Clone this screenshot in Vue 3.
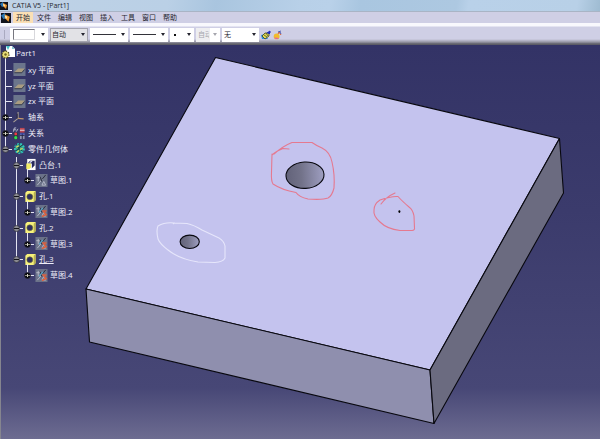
<script setup>
const menus = ['开始', '文件', '编辑', '视图', '插入', '工具', '窗口', '帮助']

const combos = [
  { id: 'fill', label: '填充颜色', kind: 'swatch', text: '' },
  { id: 'opacity', label: '透明度', kind: 'grey', text: '自动' },
  { id: 'width', label: '线宽', kind: 'line', text: '' },
  { id: 'type', label: '线型', kind: 'line', text: '' },
  { id: 'point', label: '点符号', kind: 'point', text: '' },
  { id: 'render', label: '渲染样式', kind: 'off', text: '自动' },
  { id: 'layer', label: '图层', kind: 'layer', text: '无' },
]

// rails: one entry per indent column. through = passing line, end = last branch
const rows = [
  { text: 'xy 平面', icon: 'plane', rails: ['tee'] },
  { text: 'yz 平面', icon: 'plane', rails: ['tee'] },
  { text: 'zx 平面', icon: 'plane', rails: ['tee'] },
  { text: '轴系', icon: 'axis', rails: ['tee'], node: '+' },
  { text: '关系', icon: 'relation', rails: ['tee'], node: '+' },
  { text: '零件几何体', icon: 'body', rails: ['end'], node: '-' },
  { text: '凸台.1', icon: 'pad', rails: ['', 'tee'], node: '-' },
  { text: '草图.1', icon: 'sketch', rails: ['', 'through', 'end'], node: '+' },
  { text: '孔.1', icon: 'hole', rails: ['', 'tee'], node: '-' },
  { text: '草图.2', icon: 'sketchpos', rails: ['', 'through', 'end'], node: '+' },
  { text: '孔.2', icon: 'hole', rails: ['', 'tee'], node: '-' },
  { text: '草图.3', icon: 'sketchpos', rails: ['', 'through', 'end'], node: '+' },
  { text: '孔.3', icon: 'hole', rails: ['', 'end'], node: '-', current: true },
  { text: '草图.4', icon: 'sketchpos', rails: ['', '', 'end'], node: '+' },
]
</script>

<template>
  <div class="app">
    <header class="title">
      <svg class="logo" viewBox="0 0 8 8" aria-hidden="true">
        <rect width="8" height="8" fill="#10131c" />
        <path d="M0 2 L3 0 L4 4 L2 5Z" fill="#2878b8" />
        <path d="M3 1 L7 3 L6 7 L3 4Z" fill="#ef9a32" />
        <path d="M3 2 L5 3 L4 5Z" fill="#fff5cc" />
      </svg>
      <span>CATIA V5 - [Part1]</span>
    </header>

    <nav class="menu">
      <svg class="logo big" viewBox="0 0 8 8" aria-hidden="true">
        <rect width="8" height="8" fill="#10131c" />
        <path d="M0 2 L3 0 L4 4 L2 5Z" fill="#2878b8" />
        <path d="M3 1 L7 3 L6 7 L3 4Z" fill="#ef9a32" />
        <path d="M3 2 L5 3 L4 5Z" fill="#fff5cc" />
      </svg>
      <button v-for="(m, i) in menus" :key="m" type="button" :class="{ open: i === 0 }">{{ m }}</button>
    </nav>

    <div class="tools" role="toolbar">
      <span class="grip"></span>
      <div v-for="c in combos" :key="c.id" class="combo" :class="c.kind">
        <select :id="c.id" :aria-label="c.label" :disabled="c.kind === 'off'">
          <option>{{ c.text }}</option>
        </select>
        <span v-if="!c.text" class="sample"></span>
        <svg class="arrow" viewBox="0 0 4 3" aria-hidden="true"><path d="M0 0H4L2 3Z" fill="currentColor" /></svg>
      </div>
      <button type="button" class="tool" aria-label="格式刷">
        <svg viewBox="0 0 10 10">
          <path d="M0 5 L4 4 L7 9 H1Z" fill="#2f8fe0" />
          <path d="M1 6 L4 3 L8 3 L8 6 L4 9Z" fill="#e2dc52" stroke="#3b4024" stroke-width=".8" />
          <path d="M3 5 L6 7 M5 3 L7 6" stroke="#3b4024" stroke-width=".7" />
          <path d="M6 3 L9 1 L9 3 L8 4" fill="#1c2cc0" stroke="#1c2cc0" />
        </svg>
      </button>
      <button type="button" class="tool" aria-label="图形属性向导">
        <svg viewBox="0 0 10 10">
          <circle cx="3.6" cy="6.4" r="2.900" fill="#f2bc2c" />
          <path d="M1 7.5 A3 3 0 0 0 6 8Z" fill="#df5fae" />
          <path d="M5 4 L6 2 L8 5" fill="none" stroke="#e0602a" stroke-width="1" />
          <path d="M5 2 L8 1 M7 2 L8 4" stroke="#5060b8" stroke-width="1" />
        </svg>
      </button>
    </div>

    <main class="view">
      <svg class="model" viewBox="1 45 599 394" preserveAspectRatio="xMinYMin meet" role="img" aria-label="零件模型">
        <defs>
          <linearGradient id="bore">
            <stop offset="0" stop-color="#626279" />
            <stop offset=".4" stop-color="#727289" />
            <stop offset="1" stop-color="#9f9fc2" />
          </linearGradient>
        </defs>
        <g stroke="#08080f" stroke-width="1.1" stroke-linejoin="round">
          <path d="M215.500 57.500L559.500 138.500L430 370L86 289Z" fill="#c4c3ee" />
          <path d="M86 289L430 370L434 423.500L89.500 342Z" fill="#8f8fae" />
          <path d="M559.500 138.500L563.500 193L434 423.500L430 370Z" fill="#6b6b80" />
          <ellipse cx="305" cy="175.200" rx="19" ry="13.200" fill="url(#bore)" transform="rotate(-3 305 175)" />
          <ellipse cx="189.700" cy="241.800" rx="9.600" ry="6.700" fill="url(#bore)" />
        </g>
        <ellipse cx="399.400" cy="211.600" rx="1" ry="1.300" fill="#000" />
        <g fill="none" stroke="#e5798f" stroke-width="1.1" stroke-linecap="round" stroke-linejoin="round">
          <path d="M289 149L283 148.500Q276 151 272 155M274 154Q283 146 292 142.500L312 142.500Q317 146 322 148Q330 152 332 162Q335 175 334 188Q332 196 328 198Q323 200 308 199Q299 197 296 192.500Q282 190 273 184Q271 181 271.500 172L272 154" />
          <path d="M395 193Q386 197 381 204M398 196.500Q391 196 380 200Q374 204 374 210Q373 216 380 222Q387 229 400 230.500L412 230.500Q415 230 414.500 228L414 216Q413 210 409 207Q402 201 398 196.500" />
        </g>
        <path d="M173 224L174 223Q165 222 158 226Q156 230 158 239Q160 244 168 250Q179 259 198 262L215 262.500Q223 262 225 258L225 246Q224 241 219 238L202 230Q194 225 187 223.500L174 223" fill="none" stroke="#e6e6fb" stroke-width="1.1" />
      </svg>

      <section class="spec">
        <h1 class="root">
          <svg viewBox="0 0 15 17" aria-hidden="true">
            <path d="M5 1H11L14 4V12H7L5 9Z" fill="#fff" />
            <path d="M5 1H9L7 5Z" fill="#49c3c8" /><path d="M11 1V4H14Z" fill="#8bc9d4" />
            <path d="M4.500 13V17" stroke="#e8e8f4" />
            <circle cx="4.500" cy="9.500" r="3.500" fill="#eadf78" stroke="#51481e" stroke-width="1.400" stroke-dasharray="1.400 1.300" />
            <circle cx="4.500" cy="9.500" r="1.200" fill="#706322" />
          </svg>
          <span>Part1</span>
        </h1>
        <ul class="tree">
          <li v-for="r in rows" :key="r.text">
            <svg v-for="(rail, i) in r.rails" :key="i" class="rail" viewBox="0 0 12 16" aria-hidden="true">
              <g stroke="#e4e4f2" stroke-width="1">
                <path v-if="rail === 'tee' || rail === 'through'" d="M5.500 0V16" />
                <path v-if="rail === 'end'" d="M5.500 -3V8" />
                <path v-if="rail === 'tee' || rail === 'end'" d="M5 8.500H12" />
              </g>
              <g v-if="r.node && i === r.rails.length - 1">
                <circle cx="5.500" cy="8.500" r="3" :fill="r.node === '+' ? '#08080e' : '#8a8a92'" stroke="#26262e" stroke-width=".6" />
                <path d="M3 8.500H8" :stroke="r.node === '+' ? '#8c8c80' : '#15151c'" />
                <path v-if="r.node === '+'" d="M5.500 7V10" stroke="#d8d8c8" />
              </g>
            </svg>
            <svg class="icon" viewBox="0 0 14 14" aria-hidden="true">
              <g v-if="r.icon === 'plane'">
                <rect x="1" width="13" height="14" fill="#6b758c" />
                <path d="M2 10L6 6H13L10 10Z" fill="#a99c80" /><path d="M2 10.500H10L13 7" fill="none" stroke="#343845" />
              </g>
              <g v-else-if="r.icon === 'axis'" fill="none">
                <path d="M6 8V1M6 8L1 12" stroke="#aaa094" stroke-width="1.200" />
                <path d="M6 8L12 8.500" stroke="#c0966c" stroke-width="1.200" />
                <path d="M5 3V8" stroke="#292638" />
              </g>
              <g v-else-if="r.icon === 'relation'">
                <path d="M1 5L2 1H4M1 3H4M4 5L6 2" fill="none" stroke="#b9bccb" />
                <rect x="1" y="6" width="5" height="7" fill="#303847" />
                <circle cx="3.500" cy="7.500" r="1.500" fill="#ef3945" /><circle cx="3.500" cy="11.500" r="1.700" fill="#2ee04b" />
                <rect x="8" y="1" width="5" height="5" fill="#bd4652" /><path d="M8 3.500H13" stroke="#e4dbe2" />
                <rect x="8" y="7" width="5" height="6" fill="#8f93ac" /><path d="M8 9H13M10.500 7V13" stroke="#202040" /><path d="M8 7.500H13" stroke="#263cc0" />
              </g>
              <g v-else-if="r.icon === 'body'">
                <circle cx="7.500" cy="7" r="4.700" fill="#3d9a80" stroke="#2ec7bb" stroke-width="2.400" stroke-dasharray="2 1.200" />
                <path d="M3 4L7 6L11 3M3 10L7 7L11 10M7 2V12" fill="none" stroke="#123b47" />
                <path d="M4 5.500L7 4M8 8L11 7M5 11L7 9" stroke="#d8e360" stroke-width="1.400" />
              </g>
              <g v-else-if="r.icon === 'pad'">
                <rect x="4" y="1" width="9" height="12" fill="#fff" />
                <path d="M5 5L7 3H12V8L9 11V6H5Z" fill="#292b5d" />
                <path d="M3 6H8V10L6 12H3Z" fill="#f4ee68" /><path d="M6 5L8 3H10L8 5Z" fill="#dfe0fa" />
              </g>
              <g v-else-if="r.icon === 'hole'">
                <path d="M2 3L4 1H13V11L11 13H2Z" fill="#f7f17c" />
                <path d="M11 3L13 1V11L11 13Z" fill="#b5af50" />
                <circle cx="6.800" cy="7.300" r="3.200" fill="#30305f" stroke="#77763d" stroke-width=".6" />
              </g>
              <g v-else>
                <rect x="1" width="13" height="14" fill="#6b7289" />
                <path d="M2 4H6M4 2V8M3 12L9 5M8 12L10 8L12 12Z" fill="none" stroke="#b9bdcc" />
                <path d="M6 3L8 8M8 6L12 1" stroke="#252937" />
                <g v-if="r.icon === 'sketchpos'">
                  <path d="M5 8L9 3" stroke="#58a6c8" stroke-width="1.400" />
                  <path d="M13 6.500H9.500L12.500 10.500L8 12.500" fill="none" stroke="#d9603f" stroke-width="1.800" />
                </g>
              </g>
            </svg>
            <span class="name" :class="{ current: r.current }">{{ r.text }}</span>
          </li>
        </ul>
      </section>
    </main>
  </div>
</template>

<style>
body {
  margin: 0;
}
</style>

<style scoped>
.app {
  display: flex;
  flex-direction: column;
  min-height: 100vh;
  font-family: "Open Sans", "Noto Sans CJK SC", sans-serif;
  font-size: 7px;
  color: #25252f;
}
button,
select {
  font: inherit;
  color: inherit;
  border: 0;
  padding: 0;
  margin: 0;
  border-radius: 0;
}
svg {
  display: block;
}
.title {
  display: flex;
  align-items: center;
  gap: 4px;
  height: 12px;
  box-sizing: border-box;
  border-bottom: 1px solid #a9b4c5;
  background: linear-gradient(100deg, #bfd2e6 0%, #bad0e6 28%, #a9c5df 36%, #b8d0e8 50%, #b9d1e9 55%, #a9c6e0 60%, #adc8e1 76%, #b9d1e9 78%, #b8d0e7 96%, #9ebbd1 100%);
}
.logo {
  width: 8px;
  height: 8px;
}
.logo.big {
  width: 10px;
  height: 10px;
  margin: 0 1px 0 1px;
}
.menu {
  display: flex;
  align-items: center;
  gap: 1px;
  height: 11px;
  background: #cfcfe5;
}
.menu button {
  height: 11px;
  padding: 0 3px;
  line-height: 10px;
  background: none;
}
.menu button.open {
  background: #fbe0b5;
}
.tools {
  display: flex;
  align-items: center;
  gap: 1px;
  height: 22px;
  box-sizing: border-box;
  padding-top: 1px;
  background: linear-gradient(#f8f8fd 0 3px, #cfcfe5 4px 16px, #9797a5 19px, #5c5c66 21px 22px);
}
.grip {
  width: 5px;
  height: 9px;
  margin-right: 4px;
  box-sizing: border-box;
  border-right: 1px solid #aaaac0;
}
.combo {
  display: grid;
  grid-template-columns: 1fr 5px;
  align-items: center;
  width: 38px;
  height: 14px;
  margin-right: 1px;
  padding-right: 2px;
  box-sizing: border-box;
  background: #fff;
}
.combo > * {
  grid-row: 1;
}
.combo select {
  grid-column: 1 / 3;
  width: 100%;
  height: 12px;
  padding-left: 2px;
  appearance: none;
  background: none;
  opacity: 1;
}
.sample {
  grid-column: 1;
  pointer-events: none;
}
.arrow {
  grid-column: 2;
  width: 4px;
  height: 3px;
  pointer-events: none;
}
.swatch .sample {
  height: 11px;
  margin: 0 6px 0 3px;
  box-sizing: border-box;
  border: 1px solid;
  border-color: #77777f #d8d8dc #d8d8dc #77777f;
}
.line .sample {
  height: 1px;
  margin: 0 5px 0 3px;
  background: #33333a;
}
.combo.point,
.combo.off {
  width: 24px;
}
.combo.layer {
  width: 37px;
}
.point .sample {
  width: 2px;
  height: 2px;
  margin-left: 4px;
  background: #111;
}
.grey {
  background: #e2e2e6;
  outline: 1px solid #a4a4ae;
  outline-offset: -1px;
}
.off {
  color: #a5a5ad;
  background: linear-gradient(90deg, #eeeef1 0 14px, #fff 14px);
}
.off select {
  width: 13px;
}
.tool {
  width: 10px;
  height: 10px;
  margin-right: 1px;
  background: none;
}
.tool svg {
  width: 10px;
  height: 10px;
}
.view {
  flex: 1;
  display: grid;
  align-items: start;
  border-left: 1px solid #85858f;
  background: linear-gradient(#333366 0%, #3b3b6c 42%, #474776 87%, #6d6c91 100%);
}
.model,
.spec {
  grid-area: 1 / 1;
}
.model {
  width: 100%;
}
.spec {
  justify-self: start;
  color: #eeeef8;
  font-size: 8px;
}
.root {
  display: flex;
  align-items: center;
  height: 17px;
  margin: 0;
  font-size: 8px;
  font-weight: 400;
  line-height: 10px;
}
.root svg {
  width: 15px;
  height: 17px;
}
.root span {
  padding-bottom: 1px;
}
.tree {
  display: grid;
  grid-auto-rows: 1fr;
  height: 221px;
  margin: 0;
  padding: 0;
  list-style: none;
}
.tree li {
  display: flex;
  align-items: center;
  min-height: 0;
}
.rail {
  width: 12px;
  height: 16px;
  margin-left: -1px;
  overflow: visible;
}
.icon {
  width: 14px;
  height: 13px;
  margin-right: 2px;
}
.name {
  line-height: 10px;
  white-space: nowrap;
}
.current {
  text-decoration: underline;
}
</style>
